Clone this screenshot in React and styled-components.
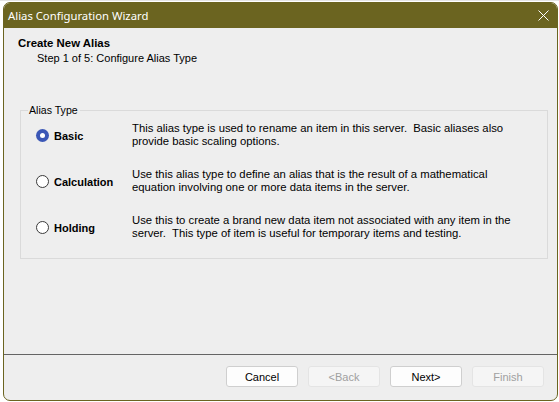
import styled, { createGlobalStyle } from "styled-components";

const Global = createGlobalStyle`
  html, body {
    margin: 0;
    padding: 0;
    background: #ffffff;
    overflow: hidden;
  }
`

const Desktop = styled.div`
  width: 559px;
  height: 402px;
  padding: 1px 0 0 3px;
  box-sizing: border-box;
  background: #ffffff;
  border-top: 1px solid #e4e4e4;
`

const Window = styled.div`
  width: 555px;
  height: 399px;
  box-sizing: border-box;
  border: 1px solid #6b6420;
  border-radius: 7px;
  background: #eeeeee;
  overflow: hidden;
  display: flex;
  flex-direction: column;
  font-family: "Liberation Sans", Arial, sans-serif;
`

const TitleBar = styled.div`
  height: 25px;
  flex-shrink: 0;
  background: #6b6420;
  color: #ffffff;
  display: flex;
  align-items: center;
  justify-content: space-between;
  padding: 0 8px 0 4px;
  font-family: "Noto Sans", "Open Sans", sans-serif;
  font-size: 11.3px;
`

const CloseIcon = styled.svg`
  width: 11px;
  height: 11px;
`

const Header = styled.div`
  padding: 8px 0 0 14px;
  color: #000;
`

const HeaderTitle = styled.div`
  font-size: 11.4px;
  font-weight: bold;
  line-height: 14px;
`

const HeaderStep = styled.div`
  font-size: 11px;
  line-height: 14px;
  padding-left: 19px;
  margin-top: 1px;
`

const Group = styled.fieldset`
  margin: 39px 0 0 16px;
  width: 528px;
  height: 155px;
  box-sizing: border-box;
  border: 1px solid #dadada;
  padding: 6px 0 0 15px;
  display: flex;
  flex-direction: column;
  gap: 20px;
`

const Legend = styled.legend`
  font-size: 10.6px;
  padding: 0 2px 0 1px;
  margin-left: -8px;
  color: #000;
`

const Option = styled.div`
  display: grid;
  grid-template-columns: 96px 1fr;
  align-items: start;
`

const RadioLabel = styled.label`
  display: flex;
  align-items: center;
  gap: 5px;
  font-size: 11px;
  font-weight: bold;
  color: #000;
  padding-top: 7px;
`

const Radio = styled.span`
  width: 13px;
  height: 13px;
  box-sizing: border-box;
  border-radius: 50%;
  flex-shrink: 0;
  border: ${p => (p.$checked ? "none" : "1px solid #3a3a3a")};
  background: ${p => (p.$checked ? "#3b57b6" : "#fff")};
  display: flex;
  align-items: center;
  justify-content: center;
  &::after {
    content: "";
    display: ${p => (p.$checked ? "block" : "none")};
    width: 5px;
    height: 5px;
    border-radius: 50%;
    background: #fff;
  }
`

const Desc = styled.div`
  font-size: 11.3px;
  line-height: 13px;
  color: #000;
  white-space: pre;
`

const Spacer = styled.div`
  flex: 1;
`

const Footer = styled.div`
  border-top: 1px solid #646464;
  height: 46px;
  flex-shrink: 0;
  display: flex;
  justify-content: flex-end;
  align-items: flex-start;
  gap: 10px;
  padding: 11px 13px 0 0;
  box-sizing: border-box;
`

const Button = styled.button`
  width: 72px;
  height: 21px;
  box-sizing: border-box;
  border-radius: 3px;
  border: 1px solid ${p => (p.disabled ? "#e4e4e4" : "#cfcfcf")};
  background: ${p => (p.disabled ? "#f5f5f5" : "#fdfdfd")};
  color: ${p => (p.disabled ? "#a0a0a0" : "#000")};
  font-family: "Liberation Sans", Arial, sans-serif;
  font-size: 11px;
  padding: 0;
`

const options = [
  {
    name: "Basic",
    checked: true,
    text: "This alias type is used to rename an item in this server.  Basic aliases also\nprovide basic scaling options.",
  },
  {
    name: "Calculation",
    text: "Use this alias type to define an alias that is the result of a mathematical\nequation involving one or more data items in the server.",
  },
  {
    name: "Holding",
    text: "Use this to create a brand new data item not associated with any item in the\nserver.  This type of item is useful for temporary items and testing.",
  },
]

export default function App() {
  return (
    <Desktop>
      <Global />
      <Window>
        <TitleBar>
          <span>Alias Configuration Wizard</span>
          <CloseIcon viewBox="0 0 11 11">
            <path d="M0.5 0.5 L10.5 10.5 M10.5 0.5 L0.5 10.5" stroke="#fff" strokeWidth="1" />
          </CloseIcon>
        </TitleBar>
        <Header>
          <HeaderTitle>Create New Alias</HeaderTitle>
          <HeaderStep>Step 1 of 5: Configure Alias Type</HeaderStep>
        </Header>
        <Group>
          <Legend>Alias Type</Legend>
          {options.map(o => (
            <Option key={o.name}>
              <RadioLabel>
                <Radio $checked={o.checked} />
                {o.name}
              </RadioLabel>
              <Desc>{o.text}</Desc>
            </Option>
          ))}
        </Group>
        <Spacer />
        <Footer>
          <Button>Cancel</Button>
          <Button disabled>&lt;Back</Button>
          <Button>Next&gt;</Button>
          <Button disabled>Finish</Button>
        </Footer>
      </Window>
    </Desktop>
  )
}
